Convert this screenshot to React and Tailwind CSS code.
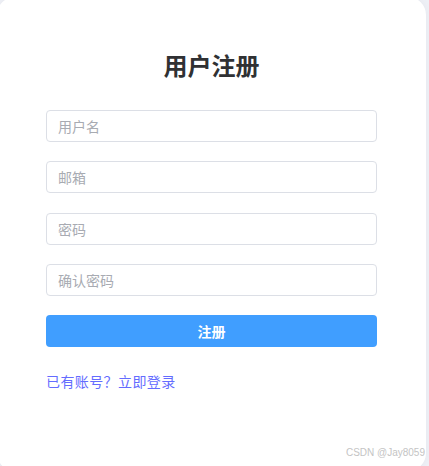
import { useState } from "react";

const font = { fontFamily: '"Noto Sans CJK SC", "Liberation Sans", sans-serif' };

function Field({ placeholder, type = "text", value, onChange }) {
    return (
        <input
            type={type}
            value={value}
            onChange={onChange}
            placeholder={placeholder}
            className="block w-full h-[32px] px-[11px] text-[14px] text-[#606266] placeholder:text-[#a8abb2] bg-white border border-[#dcdfe6] rounded-[4px] outline-none focus:border-[#409eff]"
        />
    );
}

export default function App() {
    const [form, setForm] = useState({ username: "", email: "", password: "", confirm: "" });

    const set = (key) => (e) => setForm({ ...form, [key]: e.target.value });

    return (
        <div className="relative w-[429px] h-[466px] overflow-hidden bg-[#eef0f6]" style={font}>
            <div className="w-[429px] h-[474px] -ml-[3px] -mt-[3px] bg-white rounded-[18px] shadow-[0_0_8px_rgba(0,0,0,0.04)] pt-[52px] pl-[49px] pr-[49px]">
                <h2 className="text-center text-[24px] leading-[32px] font-bold text-[#303133]">用户注册</h2>
                <div className="mt-[29px] flex flex-col gap-[19.3px]">
                    <Field placeholder="用户名" value={form.username} onChange={set("username")} />
                    <Field placeholder="邮箱" value={form.email} onChange={set("email")} />
                    <Field placeholder="密码" type="password" value={form.password} onChange={set("password")} />
                    <Field placeholder="确认密码" type="password" value={form.confirm} onChange={set("confirm")} />
                    <button className="w-full h-[32px] rounded-[4px] bg-[#409eff] text-white text-[14px] font-bold">
                        注册
                    </button>
                </div>
                <div className="mt-[24px] text-[14px] leading-[20px]">
                    <a href="#" className="text-[#646cff] tracking-[0.4px]">已有账号？立即登录</a>
                </div>
            </div>
            <div className="absolute right-[4px] bottom-[6px] text-[10px] text-[#c4c4c4]" style={{ fontFamily: '"Liberation Sans", sans-serif' }}>
                CSDN @Jay8059
            </div>
        </div>
    );
}
